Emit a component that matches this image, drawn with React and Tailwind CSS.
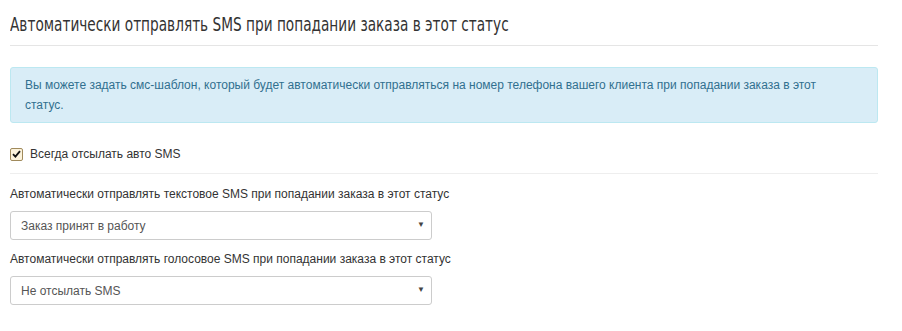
import { useState } from 'react';

const FONT = { fontFamily: '"Liberation Sans", Arial, sans-serif' };

function Select({ value, options, onChange }) {
  return (
    <div className="relative w-[422px]">
      <select
        value={value}
        onChange={e => onChange(e.target.value)}
        className="appearance-none w-full h-[29px] border border-[#cccccc] rounded-[3px] bg-white pl-[10px] pr-8 text-[12px] text-[#555555] outline-none"
        style={FONT}
      >
        {options.map(o => <option key={o}>{o}</option>)}
      </select>
      <span className="pointer-events-none absolute right-[7px] top-[10px] text-[8px] leading-none text-[#444]">▼</span>
    </div>
  );
}

export default function App() {
  const [always, setAlways] = useState(true);
  const [textSms, setTextSms] = useState('Заказ принят в работу');
  const [voiceSms, setVoiceSms] = useState('Не отсылать SMS');

  return (
    <div className="bg-white w-[902px] h-[331px] pl-[10px] pr-[24px] text-[#333333]" style={FONT}>
      {/* Heading */}
      <h1 className="pt-[14px] pb-[9px] leading-[20px] text-[#333] border-b border-[#e5e5e5] whitespace-nowrap">
        <span
          className="inline-block origin-left scale-x-[0.8] text-[19px]"
          style={{ fontFamily: '"DejaVu Sans Condensed", "DejaVu Sans", sans-serif' }}
        >
          Автоматически отправлять SMS при попадании заказа в этот статус
        </span>
      </h1>

      {/* Info */}
      <div className="mt-[21px] bg-[#d9edf7] border border-[#bce8f1] rounded-[3px] pl-[14px] pr-[50px] py-[7px] text-[12px] leading-[20px] text-[#31708f]">
        Вы можете задать смс-шаблон, который будет автоматически отправляться на номер телефона вашего клиента при попадании заказа в этот статус.
      </div>

      {/* Always */}
      <label className="mt-[24px] flex items-center gap-[7px] text-[12px] leading-[14px] cursor-pointer">
        <span
          onClick={() => setAlways(!always)}
          className="w-[13px] h-[13px] rounded-[2px] border border-[#a08a5c] bg-[#fcf3dc] flex items-center justify-center"
        >
          {always && (
            <svg width="9" height="8" viewBox="0 0 9 8">
              <path d="M1 4.2 L3.4 6.6 L8 1.2" fill="none" stroke="#111" strokeWidth="1.8" />
            </svg>
          )}
        </span>
        Всегда отсылать авто SMS
      </label>

      <div className="mt-[12px] border-t border-[#eeeeee]" />

      {/* Selects */}
      <div className="mt-[13px] text-[12px] leading-[15px]">Автоматически отправлять текстовое SMS при попадании заказа в этот статус</div>
      <div className="mt-[9px]">
        <Select value={textSms} onChange={setTextSms} options={['Заказ принят в работу', 'Не отсылать SMS']} />
      </div>

      <div className="mt-[12px] text-[12px] leading-[15px]">Автоматически отправлять голосовое SMS при попадании заказа в этот статус</div>
      <div className="mt-[9px]">
        <Select value={voiceSms} onChange={setVoiceSms} options={['Не отсылать SMS', 'Заказ принят в работу']} />
      </div>
    </div>
  );
}
